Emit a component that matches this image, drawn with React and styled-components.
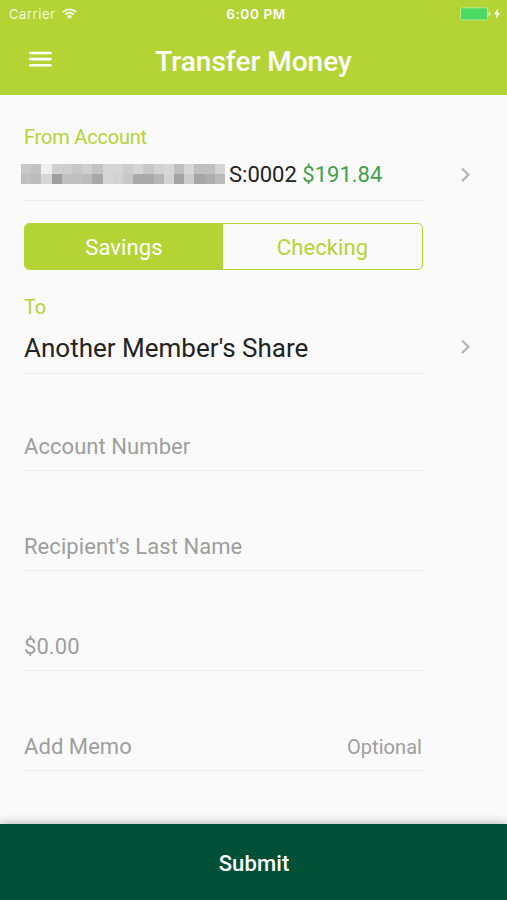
import React, { useState } from 'react';
import styled, { createGlobalStyle } from 'styled-components';

const LIME = '#b4d436';

const GlobalStyle = createGlobalStyle`
  * {
    box-sizing: border-box;
  }

  body {
    margin: 0;
    background: #fafafa;
    font-family: Roboto, 'Liberation Sans', sans-serif;
  }
`;

const Screen = styled.div`
  display: flex;
  flex-direction: column;
  width: 507px;
  height: 900px;
  overflow: hidden;
  background: #fafafa;
`;

const Header = styled.header`
  height: 95px;
  flex: none;
  background: ${LIME};
  color: white;
`;

const StatusBar = styled.div`
  display: grid;
  grid-template-columns: 1fr auto 1fr;
  align-items: center;
  height: 27px;
  padding: 0 5px 0 9px;
  font-family: Inter, sans-serif;
  font-size: 13px;
`;

const Carrier = styled.div`
  display: flex;
  align-items: center;
  gap: 7px;
  letter-spacing: 0.55px;
  opacity: 0.85;
`;

const Clock = styled.div`
  padding-left: 1px;
  font-size: 13.5px;
  font-weight: 600;
  letter-spacing: 0.6px;
`;

const Power = styled.div`
  display: flex;
  justify-content: flex-end;
`;

const TitleBar = styled.div`
  display: grid;
  grid-template-columns: 81px 1fr 81px;
  align-items: center;
  height: 70px;
`;

const MenuButton = styled.button`
  display: flex;
  justify-content: center;
  padding: 0 1px 6px 0;
  border: 0;
  background: none;
  color: inherit;
`;

const Title = styled.h1`
  margin: 0;
  font-size: 28px;
  font-weight: 500;
  line-height: 70px;
  text-align: center;
`;

const Form = styled.main`
  flex: 1;
  padding: 30px 35px 0 24px;
`;

const Label = styled.div`
  height: 24px;
  color: ${LIME};
  font-size: 20px;
  line-height: 24px;
  letter-spacing: -0.2px;
`;

const Picker = styled.div`
  display: flex;
  align-items: center;
  justify-content: space-between;
  height: ${props => props.$height}px;
`;

const PickerValue = styled.div`
  display: flex;
  align-items: center;
  width: 400px;
  height: 100%;
  padding-top: ${props => (props.$size ? 0 : 4)}px;
  border-bottom: 1px solid #ececec;
  color: #222;
  font-size: ${props => props.$size || 26}px;
  white-space: pre;
`;

const Amount = styled.span`
  color: #43a047;
`;

const Mosaic = styled.div`
  display: grid;
  grid-template-columns: repeat(20, 1fr);
  width: 204px;
  height: 20px;
  margin: -2px 4px 0 -3px;
`;

const Tile = styled.span`
  background: ${props => props.$shade};
`;

const Segments = styled.div`
  display: flex;
  width: 399px;
  height: 47px;
  margin: 22px 0 25px;
  overflow: hidden;
  border: 1.5px solid ${LIME};
  border-radius: 5px;
`;

const Segment = styled.button`
  flex: ${props => (props.$active ? '0 0 198px' : 1)};
  padding: 2px 0 0;
  border: 0;
  background: ${props => (props.$active ? LIME : 'transparent')};
  color: ${props => (props.$active ? 'white' : LIME)};
  font-family: inherit;
  font-size: 22px;
  letter-spacing: 0.1px;
`;

const Field = styled.label`
  display: flex;
  align-items: center;
  justify-content: space-between;
  width: 400px;
  height: 48px;
  margin-top: ${props => props.$gap || 52}px;
  border-bottom: 1px solid #ececec;
  color: #9e9e9e;
  font-size: 22px;
  letter-spacing: 0.06px;
`;

const Hint = styled.span`
  padding-right: 2px;
  font-size: 20px;
`;

const Submit = styled.button`
  z-index: 1;
  flex: none;
  height: 76px;
  padding: 2px 0 0 1px;
  border: 0;
  box-shadow: 0 -2px 8px rgba(0, 0, 0, 0.22);
  background: #004f37;
  color: white;
  font-family: inherit;
  font-size: 22px;
  font-weight: 500;
  letter-spacing: 0.1px;
`;

const TILES = [
  'c8 c2 f0 d0 ce c8 d0 c4 d6 d6 cc d4 c8 d2 d6 c0 d6 c0 c0 d4',
  'c0 bc d6 a0 c0 c0 bc a8 d6 d2 c8 aa aa b6 d4 a4 cc a6 ae ba',
]
  .join(' ')
  .split(' ')
  .map(v => `#${v}${v}${v}`);

const FIELDS = [
  { name: 'Account Number', gap: 49 },
  { name: "Recipient's Last Name" },
  { name: '$0.00' },
  { name: 'Add Memo', hint: 'Optional' },
];

const WifiIcon = () => (
  <svg width="15" height="11" viewBox="0 0 15 11" fill="none" stroke="white" strokeWidth="1.8">
    <path d="M0.8 4.1a9.5 9.5 0 0 1 13.4 0M3.2 6.5a6.1 6.1 0 0 1 8.6 0" />
    <path d="M7.5 11 4.9 8.2a3.8 3.8 0 0 1 5.2 0z" fill="white" stroke="none" />
  </svg>
);

const BatteryIcon = () => (
  <svg width="42" height="14" viewBox="0 0 42 14">
    <rect x="0.5" y="0.8" width="27" height="12.2" rx="1.8" fill="#4cd964" stroke="#b5ec8c" />
    <path d="M28.500 5v4c2.500-.5 2.500-3.500 0-4z" fill="#e8f5b8" />
    <path d="M38 1.500 34 7.600h2.600l-1 4.700 4.700-6.500h-2.700z" fill="white" />
  </svg>
);

const MenuIcon = () => (
  <svg width="24" height="18" viewBox="0 0 24 18" stroke="white" strokeWidth="2.6" strokeLinecap="round">
    <path d="M2.200 3h20.300M2.200 9.100h20.300M2.200 15.200h20.300" />
  </svg>
);

const Chevron = () => (
  <svg width="12" height="16" viewBox="0 0 12 16" fill="none" stroke="#b7b7b7" strokeWidth="2.3">
    <path d="m2 1.500 6.400 6.300L2 14.100" />
  </svg>
);

const App = () => {
  const [kind, setKind] = useState('Savings');

  return (
    <Screen>
      <GlobalStyle />
      <Header>
        <StatusBar>
          <Carrier>
            Carrier
            <WifiIcon />
          </Carrier>
          <Clock>6:00 PM</Clock>
          <Power>
            <BatteryIcon />
          </Power>
        </StatusBar>
        <TitleBar>
          <MenuButton aria-label="Menu">
            <MenuIcon />
          </MenuButton>
          <Title>Transfer Money</Title>
        </TitleBar>
      </Header>

      <Form>
        <Label>From Account</Label>
        <Picker $height={52}>
          <PickerValue $size={22}>
            <Mosaic>
              {TILES.map((shade, i) => (
                <Tile key={i} $shade={shade} />
              ))}
            </Mosaic>
            S:0002 <Amount>$191.84</Amount>
          </PickerValue>
          <Chevron />
        </Picker>

        <Segments>
          {['Savings', 'Checking'].map(name => (
            <Segment key={name} $active={name === kind} onClick={() => setKind(name)}>
              {name}
            </Segment>
          ))}
        </Segments>

        <Label>To</Label>
        <Picker $height={55}>
          <PickerValue>Another Member&apos;s Share</PickerValue>
          <Chevron />
        </Picker>

        {FIELDS.map(({ name, gap, hint }) => (
          <Field key={name} $gap={gap}>
            {name}
            {hint && <Hint>{hint}</Hint>}
          </Field>
        ))}
      </Form>

      <Submit>Submit</Submit>
    </Screen>
  );
};

export default App;
